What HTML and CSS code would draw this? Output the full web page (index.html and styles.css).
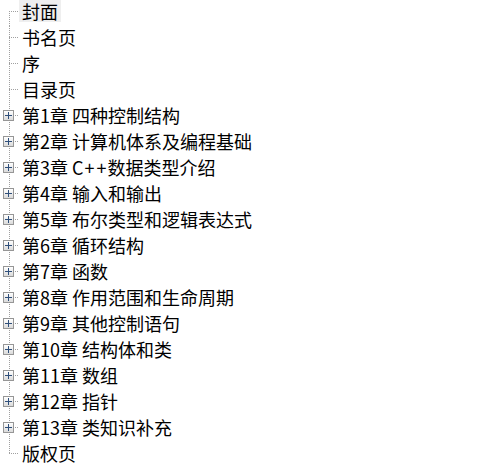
FILE: index.html
```html
<!DOCTYPE html>
<html lang="zh-CN">
<head>
<meta charset="utf-8">
<title>目录</title>
<link rel="stylesheet" href="styles.css">
</head>
<body>
<ul class="tree">
  <li class="node first"><span class="gutter"></span><span class="label selected">封面</span></li>
  <li class="node"><span class="gutter"></span><span class="label">书名页</span></li>
  <li class="node"><span class="gutter"></span><span class="label">序</span></li>
  <li class="node"><span class="gutter"></span><span class="label">目录页</span></li>
  <li class="node"><span class="gutter"><span class="plus"></span></span><span class="label">第1章 四种控制结构</span></li>
  <li class="node"><span class="gutter"><span class="plus"></span></span><span class="label">第2章 计算机体系及编程基础</span></li>
  <li class="node"><span class="gutter"><span class="plus"></span></span><span class="label">第3章 C<span class="op">+</span><span class="op">+</span>数据类型介绍</span></li>
  <li class="node"><span class="gutter"><span class="plus"></span></span><span class="label">第4章 输入和输出</span></li>
  <li class="node"><span class="gutter"><span class="plus"></span></span><span class="label">第5章 布尔类型和逻辑表达式</span></li>
  <li class="node"><span class="gutter"><span class="plus"></span></span><span class="label">第6章 循环结构</span></li>
  <li class="node"><span class="gutter"><span class="plus"></span></span><span class="label">第7章 函数</span></li>
  <li class="node"><span class="gutter"><span class="plus"></span></span><span class="label">第8章 作用范围和生命周期</span></li>
  <li class="node"><span class="gutter"><span class="plus"></span></span><span class="label">第9章 其他控制语句</span></li>
  <li class="node"><span class="gutter"><span class="plus"></span></span><span class="label">第10章 结构体和类</span></li>
  <li class="node"><span class="gutter"><span class="plus"></span></span><span class="label">第11章 数组</span></li>
  <li class="node"><span class="gutter"><span class="plus"></span></span><span class="label">第12章 指针</span></li>
  <li class="node"><span class="gutter"><span class="plus"></span></span><span class="label">第13章 类知识补充</span></li>
  <li class="node last"><span class="gutter"></span><span class="label">版权页</span></li>
</ul>
</body>
</html>
```
FILE: styles.css
```css
html, body {
  margin: 0;
  padding: 0;
  background: #ffffff;
}
body {
  font-family: "Noto Sans CJK SC", "Noto Sans", sans-serif;
  font-size: 18px;
  color: #000000;
  overflow: hidden;
}
.tree {
  list-style: none;
  margin: 0;
  padding: 0;
}
.node {
  display: flex;
  align-items: flex-start;
  height: 26px;
}
.gutter {
  flex: none;
  width: 19px;
  height: 26px;
  display: flex;
  align-items: flex-start;
  --dot: #a0a0a0;
  background-image:
    repeating-linear-gradient(to bottom, var(--dot) 0 1px, transparent 1px 2px),
    repeating-linear-gradient(to right, var(--dot) 0 1px, transparent 1px 2px);
  background-repeat: no-repeat;
  background-size: 1px 26px, 10px 1px;
  background-position: 9px 0, 9px 11px;
}
.first .gutter {
  background-size: 1px 15px, 10px 1px;
  background-position: 9px 11px, 9px 11px;
}
.last .gutter {
  background-size: 1px 12px, 10px 1px;
  background-position: 9px 0, 9px 11px;
}
.plus {
  box-sizing: border-box;
  width: 11px;
  height: 11px;
  margin: 6px 0 0 3px;
  border: 1px solid #969696;
  background-color: #f4f4f4;
  background-image:
    linear-gradient(#2f4f7a, #2f4f7a),
    linear-gradient(#2f4f7a, #2f4f7a),
    linear-gradient(#ffffff, #dadada);
  background-repeat: no-repeat;
  background-size: 7px 1px, 1px 7px, 100% 100%;
  background-position: 1px 4px, 4px 1px, 0 0;
}
.label {
  height: 22px;
  line-height: 22px;
  padding: 0 3px;
  white-space: nowrap;
}
.op {
  padding: 0 1px;
}
.selected {
  background: #efefef;
}
```
